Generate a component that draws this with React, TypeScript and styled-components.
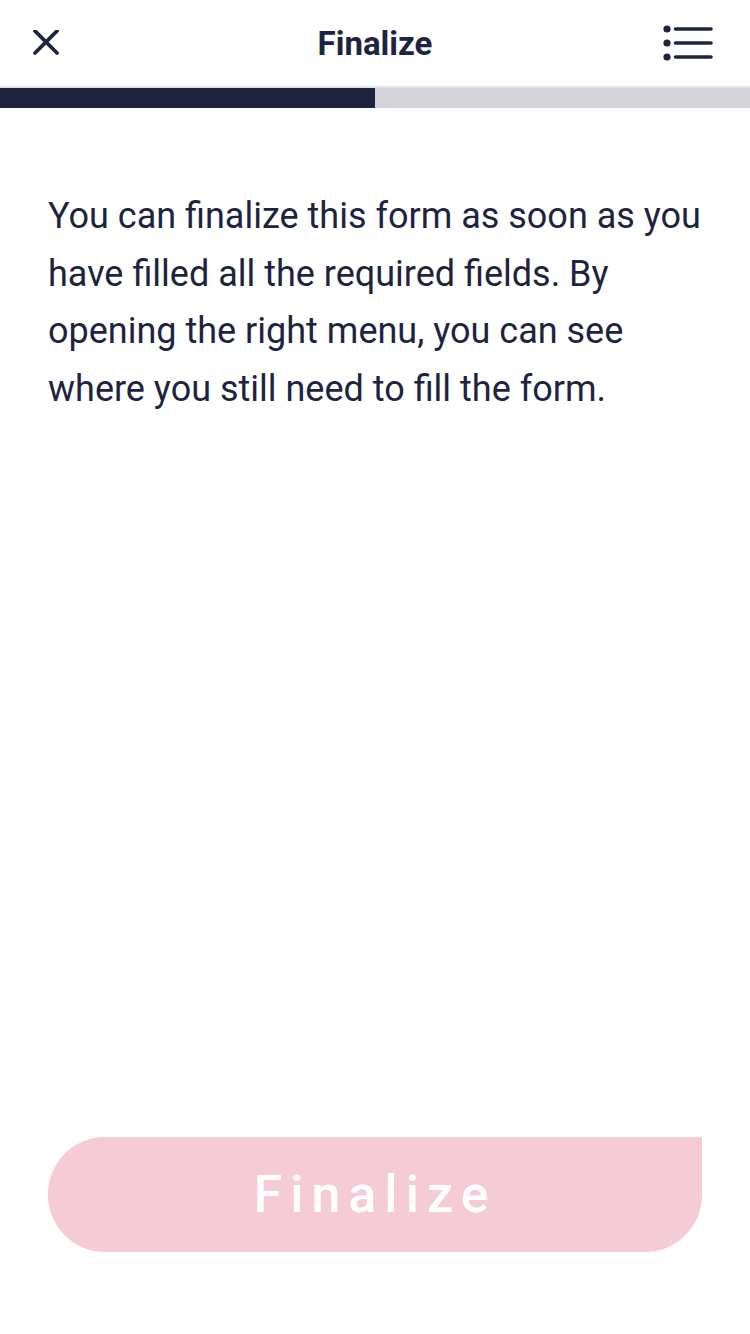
import { createGlobalStyle, styled } from 'styled-components';

const GlobalStyle = createGlobalStyle`
  html, body {
    margin: 0;
    padding: 0;
    background: #ffffff;
  }
  body {
    font-family: Roboto, "Liberation Sans", sans-serif;
    color: #1e2440;
  }
`;

const Page = styled.div`
  width: 750px;
  height: 1334px;
  display: flex;
  flex-direction: column;
  background: #ffffff;
`;

const Header = styled.header`
  height: 86px;
  display: flex;
  align-items: center;
  justify-content: space-between;
  padding: 0 36px 0 30px;
  border-bottom: 2px solid #e4e4e8;
`;

const IconButton = styled.button<{ $align?: 'start' | 'end' }>`
  width: 52px;
  height: 36px;
  padding: 0;
  border: none;
  background: none;
  display: flex;
  align-items: center;
  justify-content: ${p => (p.$align === 'end' ? 'flex-end' : 'flex-start')};
  color: #1e2440;
`;

const Title = styled.h1`
  margin: 0 0 0 6px;
  font-size: 33px;
  font-weight: 700;
`;

const Progress = styled.div`
  height: 20px;
  background: #d3d3d8;
`;

const ProgressFill = styled.div`
  height: 100%;
  background: #1e2440;
`;

const Content = styled.main`
  flex: 1;
  display: flex;
  flex-direction: column;
  padding: 80px 40px 82px 48px;
`;

const Text = styled.p`
  margin: 0;
  font-size: 36px;
  line-height: 57.5px;
  font-weight: 400;
  color: #1e2440;
`;

const Spacer = styled.div`
  flex: 1;
`;

const FinalizeButton = styled.button<{ $disabled: boolean }>`
  height: 115px;
  width: 654px;
  border: none;
  border-radius: 57px 0 57px 57px;
  background: ${p => (p.$disabled ? '#f5cbd5' : '#e0466c')};
  color: #ffffff;
  font-family: Roboto, "Liberation Sans", sans-serif;
  font-size: 52px;
  font-weight: 500;
  letter-spacing: 8px;
  padding: 0;
`;

export default function App() {
  const progress = 50;
  return (
    <Page>
      <GlobalStyle />
      <Header>
        <IconButton aria-label="close" $align="start">
          <svg width="30" height="26" viewBox="0 0 30 26">
            <path d="M5 1 L27 23 M27 1 L5 23" stroke="currentColor" strokeWidth="3.8" strokeLinecap="round" />
          </svg>
        </IconButton>
        <Title>Finalize</Title>
        <IconButton aria-label="menu" $align="end">
          <svg width="52" height="36" viewBox="0 0 52 36">
            <circle cx="5" cy="4" r="3.6" fill="currentColor" />
            <circle cx="5" cy="18" r="3.6" fill="currentColor" />
            <circle cx="5" cy="32" r="3.6" fill="currentColor" />
            <path d="M13.5 4 H49 M13.5 18 H49 M13.5 32 H49" stroke="currentColor" strokeWidth="3.6" strokeLinecap="round" />
          </svg>
        </IconButton>
      </Header>
      <Progress>
        <ProgressFill style={{ width: `${progress}%` }} />
      </Progress>
      <Content>
        <Text>
          You can finalize this form as soon as you have filled all the required fields. By opening the right menu, you can see where you still need to fill the form.
        </Text>
        <Spacer />
        <FinalizeButton $disabled>Finalize</FinalizeButton>
      </Content>
    </Page>
  );
}
